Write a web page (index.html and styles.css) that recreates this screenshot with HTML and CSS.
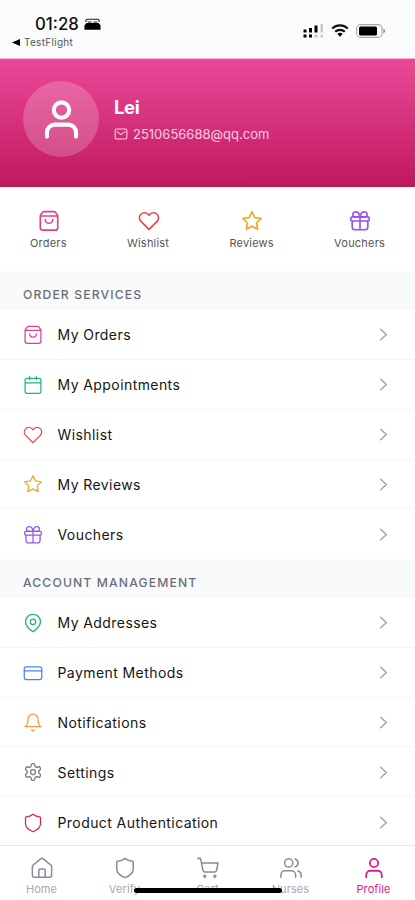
FILE: index.html
```html
<!DOCTYPE html>
<html lang="en">
<head>
<meta charset="utf-8">
<meta name="viewport" content="width=device-width, initial-scale=1">
<title>Profile</title>
<link rel="stylesheet" href="styles.css">
</head>
<body>
<svg class="sprite" aria-hidden="true">
  <symbol id="bag" viewBox="0 0 24 24"><path d="M2.500 6.500Q2.500 5.500 3.500 4.500L5 2.500q.7-.8 1.700-.8h10.600q1 0 1.700.8l1.500 2q1 1 1 2V19.500a2.500 2.500 0 0 1-2.500 2.500H5a2.500 2.500 0 0 1-2.500-2.500zM3 6.500h18M16 10.500a4 4 0 0 1-8 0"/></symbol>
  <symbol id="heart" viewBox="0 0 24 24"><path d="M20.800 4.600a5.500 5.500 0 0 0-7.800 0L12 5.700l-1-1.100a5.500 5.500 0 0 0-7.800 7.800L12 21.200l8.800-8.800a5.500 5.500 0 0 0 0-7.800z"/></symbol>
  <symbol id="star" viewBox="0 0 24 24"><path d="m12 2 3.100 6.300 6.900 1-5 4.900 1.200 6.900-6.200-3.300-6.200 3.300L7 14.200 2 9.300l6.900-1z"/></symbol>
  <symbol id="gift" viewBox="0 0 24 24"><rect x="2" y="7.500" width="20" height="4.500" rx="1.500"/><path d="M3.500 12v6.500a3 3 0 0 0 3 3h11a3 3 0 0 0 3-3V12M12 7.500v14M12 7.500H7.500a2.800 2.800 0 1 1 0-5.500C11 2 12 7.500 12 7.500zm0 0h4.500a2.800 2.800 0 1 0 0-5.500C13 2 12 7.500 12 7.500z"/></symbol>
  <symbol id="calendar" viewBox="0 0 24 24"><rect x="2.500" y="4" width="19" height="18" rx="2.500"/><path d="M8 1.500v4M16 1.500v4M3 9.500h18"/></symbol>
  <symbol id="pin" viewBox="0 0 24 24"><path d="M21 10.500C21 17 12 22.500 12 22.500S3 17 3 10.500a9 9 0 0 1 18 0z"/><circle cx="12" cy="10.500" r="3.300"/></symbol>
  <symbol id="card" viewBox="0 0 24 24"><rect x="1.500" y="4.500" width="21" height="15.500" rx="2.500"/><path d="M1.500 9.500h21"/></symbol>
  <symbol id="bell" viewBox="0 0 24 24"><path d="M18 8.500a6 6 0 0 0-12 0c0 7-3.500 9-3.500 9h19S18 15.500 18 8.500M13.700 21.500a2 2 0 0 1-3.400 0"/></symbol>
  <symbol id="gear" viewBox="0 0 24 24"><path d="M12.220 2h-.44a2 2 0 0 0-2 2v.18a2 2 0 0 1-1 1.730l-.43.25a2 2 0 0 1-2 0l-.15-.08a2 2 0 0 0-2.730.73l-.22.38a2 2 0 0 0 .73 2.730l.15.1a2 2 0 0 1 1 1.720v.51a2 2 0 0 1-1 1.740l-.15.09a2 2 0 0 0-.73 2.730l.22.38a2 2 0 0 0 2.730.73l.15-.08a2 2 0 0 1 2 0l.43.25a2 2 0 0 1 1 1.730V20a2 2 0 0 0 2 2h.44a2 2 0 0 0 2-2v-.18a2 2 0 0 1 1-1.730l.43-.25a2 2 0 0 1 2 0l.15.08a2 2 0 0 0 2.730-.73l.22-.39a2 2 0 0 0-.73-2.730l-.15-.08a2 2 0 0 1-1-1.740v-.5a2 2 0 0 1 1-1.740l.15-.09a2 2 0 0 0 .73-2.730l-.22-.38a2 2 0 0 0-2.730-.73l-.15.08a2 2 0 0 1-2 0l-.43-.25a2 2 0 0 1-1-1.730V4a2 2 0 0 0-2-2z"/><circle cx="12" cy="12" r="3"/></symbol>
  <symbol id="shield" viewBox="0 0 24 24"><path d="M12 1.500c2.500 2 5 3 8 3.200q1 .1 1 1V13c0 5-4 7.500-9 9.500-5-2-9-4.500-9-9.500V5.700q0-.9 1-1C7 4.500 9.500 3.500 12 1.500z"/></symbol>
  <symbol id="house" viewBox="0 0 24 24"><path d="M1.500 10.500a2 2 0 0 1 .7-1.500L10.600 2a2.100 2.100 0 0 1 2.800 0l8.400 7a2 2 0 0 1 .7 1.500v9.500a2 2 0 0 1-2 2h-17a2 2 0 0 1-2-2zM8.500 22v-7.500a1.500 1.500 0 0 1 1.500-1.500h4a1.500 1.500 0 0 1 1.500 1.500V22"/></symbol>
  <symbol id="cart" viewBox="0 0 24 24"><path d="M.8 1.500h3l2.800 13.200a2 2 0 0 0 2 1.600h10.700a2 2 0 0 0 2-1.600L23 6.500H4.800"/><circle cx="8.500" cy="21" r="1"/><circle cx="19.500" cy="21" r="1"/></symbol>
  <symbol id="user" viewBox="0 0 24 24"><circle cx="12" cy="6.500" r="4.500"/><path d="M3.500 22v-2.500a4.500 4.500 0 0 1 4.500-4.500h8a4.500 4.500 0 0 1 4.500 4.500V22"/></symbol>
  <symbol id="users" viewBox="0 0 24 24"><circle cx="9.500" cy="6.500" r="4.500"/><path d="M1 22v-2.500A4.500 4.500 0 0 1 5.500 15h7a4.500 4.500 0 0 1 4.500 4.500V22M23 22v-2.500a4.500 4.500 0 0 0-3.500-4.200M16.500 2.200a4.500 4.500 0 0 1 0 8.600"/></symbol>
  <symbol id="mail" viewBox="0 0 24 24"><rect x="2" y="3.500" width="20" height="17" rx="2"/><path d="m5 8 7 5 7-5"/></symbol>
  <symbol id="chevron" viewBox="0 0 24 24"><path d="m8 4.500 8 7.500-8 7.500"/></symbol>
</svg>

<div class="screen">
  <header class="status">
    <div class="status-left">
      <div class="clock">01:28
        <svg class="bed" viewBox="0 0 18 12"><path d="M2 4V2.500Q2 1 3.500 1h11Q16 1 16 2.500V4" fill="none" stroke="#222" stroke-width="1.200"/><path d="M4 3h4v2H4zM10 3h4v2h-4z" fill="#777"/><path d="M2.500 5h13L17.500 7.500V12H.5V7.500z"/></svg>
      </div>
      <div class="back"><svg class="back-arrow" viewBox="0 0 8 7"><path d="M8 0v7L0 3.500z"/></svg><span>TestFlight</span></div>
    </div>
    <div class="status-right">
      <svg class="signal" viewBox="0 0 21 14"><path d="M.5 5.500h3v3h-3zM6 4h3v4.500H6zM11.500 1.500h3v7h-3zM.5 10.500h3v3h-3zM6 10.500h3v3H6z"/><path d="M17.500 0h2.500v8.500h-2.500zM11.500 10.500h3v3h-3zM17.500 10.500H20v3h-2.500z" fill="#c9c9cb"/></svg>
      <svg class="wifi" viewBox="0 0 18 13"><path d="M1.200 4.500a11.500 11.500 0 0 1 15.600 0M4.200 7.700a7 7 0 0 1 9.600 0" fill="none" stroke="#111" stroke-width="2.200"/><path d="m9 12.800-2.700-2.700a3.900 3.900 0 0 1 5.400 0z"/></svg>
      <svg class="battery" viewBox="0 0 30 14"><rect x=".6" y=".6" width="25.500" height="12.800" rx="4" fill="none" stroke="#a9a9aa" stroke-width="1.100"/><rect x="3" y="2.600" width="18" height="8.800" rx="1.500"/><path d="M27.500 4.500q3 2.500 0 5z" fill="#777"/></svg>
    </div>
  </header>

  <section class="hero">
    <div class="avatar"><svg class="icon"><use href="#user"/></svg></div>
    <div class="identity">
      <h1 class="name">Lei</h1>
      <div class="email"><svg class="icon"><use href="#mail"/></svg><span>2510656688@qq.com</span></div>
    </div>
  </section>

  <section class="quick">
    <a class="quick-item pink"><svg class="icon"><use href="#bag"/></svg><span class="quick-label">Orders</span></a>
    <a class="quick-item red"><svg class="icon"><use href="#heart"/></svg><span class="quick-label">Wishlist</span></a>
    <a class="quick-item amber"><svg class="icon"><use href="#star"/></svg><span class="quick-label">Reviews</span></a>
    <a class="quick-item purple"><svg class="icon"><use href="#gift"/></svg><span class="quick-label">Vouchers</span></a>
  </section>

  <main class="menu">
    <h2 class="section-title">ORDER SERVICES</h2>
    <div class="list">
      <a class="row"><svg class="icon pink"><use href="#bag"/></svg><span class="label">My Orders</span><svg class="chevron"><use href="#chevron"/></svg></a>
      <a class="row"><svg class="icon green"><use href="#calendar"/></svg><span class="label">My Appointments</span><svg class="chevron"><use href="#chevron"/></svg></a>
      <a class="row"><svg class="icon red"><use href="#heart"/></svg><span class="label">Wishlist</span><svg class="chevron"><use href="#chevron"/></svg></a>
      <a class="row"><svg class="icon amber"><use href="#star"/></svg><span class="label">My Reviews</span><svg class="chevron"><use href="#chevron"/></svg></a>
      <a class="row"><svg class="icon purple"><use href="#gift"/></svg><span class="label">Vouchers</span><svg class="chevron"><use href="#chevron"/></svg></a>
    </div>
    <h2 class="section-title">ACCOUNT MANAGEMENT</h2>
    <div class="list">
      <a class="row"><svg class="icon green"><use href="#pin"/></svg><span class="label">My Addresses</span><svg class="chevron"><use href="#chevron"/></svg></a>
      <a class="row"><svg class="icon blue"><use href="#card"/></svg><span class="label">Payment Methods</span><svg class="chevron"><use href="#chevron"/></svg></a>
      <a class="row"><svg class="icon orange"><use href="#bell"/></svg><span class="label">Notifications</span><svg class="chevron"><use href="#chevron"/></svg></a>
      <a class="row"><svg class="icon gray"><use href="#gear"/></svg><span class="label">Settings</span><svg class="chevron"><use href="#chevron"/></svg></a>
      <a class="row"><svg class="icon crimson"><use href="#shield"/></svg><span class="label">Product Authentication</span><svg class="chevron"><use href="#chevron"/></svg></a>
    </div>
  </main>

  <nav class="tabs">
    <a class="tab"><svg class="icon"><use href="#house"/></svg><span>Home</span></a>
    <a class="tab"><svg class="icon"><use href="#shield"/></svg><span>Verify</span></a>
    <a class="tab"><svg class="icon"><use href="#cart"/></svg><span>Cart</span></a>
    <a class="tab"><svg class="icon"><use href="#users"/></svg><span>Nurses</span></a>
    <a class="tab active"><svg class="icon"><use href="#user"/></svg><span>Profile</span></a>
    <div class="home-indicator"></div>
  </nav>
</div>
</body>
</html>
```
FILE: styles.css
```css
* { box-sizing: border-box; }
body { margin: 0; background: #fff; color: #151515; font-family: Inter, "Liberation Sans", sans-serif; }
h1, h2 { margin: 0; }
svg { display: block; flex: none; }
.sprite { position: absolute; width: 0; height: 0; }
.icon, .chevron { fill: none; stroke: currentColor; stroke-linecap: round; stroke-linejoin: round; }
.screen { display: flex; flex-direction: column; width: 415px; height: 900px; overflow: hidden; }

.status { flex: none; height: 59px; display: flex; justify-content: space-between; background: #f9fbfd; border-bottom: 1px solid #f7b3d2; }
.status-left { padding: 14px 0 0 12px; }
.clock { display: flex; align-items: center; gap: 5px; padding-left: 23px; height: 20px; font-size: 16.800px; font-weight: 500; color: #111; }
.bed { width: 17px; height: 12px; }
.back { display: flex; align-items: center; gap: 4px; height: 16px; font-size: 10px; letter-spacing: .3px; color: #555; }
.back-arrow { width: 8px; height: 7px; }
.status-right { display: flex; align-items: center; padding: 3px 29px 0 0; }
.signal { width: 21px; height: 14px; margin-right: 7px; }
.wifi { width: 18px; height: 13px; margin-right: 7px; }
.battery { width: 30px; height: 14px; }

.hero { flex: none; height: 128px; display: flex; align-items: flex-start; gap: 15px; padding: 22px 23px 0; color: #fff; background: linear-gradient(#ec4899, #be185d); }
.avatar { display: flex; align-items: center; justify-content: center; width: 76px; height: 76px; border-radius: 50%; background: rgba(255,255,255,.2); }
.avatar .icon { width: 41px; height: 41px; stroke-width: 2.400; }
.identity { padding-top: 15px; }
.name { font-size: 18.500px; line-height: 23px; font-weight: 700; letter-spacing: -.4px; }
.email { display: flex; align-items: center; gap: 5px; margin-top: 5px; font-size: 13px; line-height: 20px; color: #f9cfe2; }
.email .icon { width: 14px; height: 14px; stroke-width: 1.800; }

.quick { flex: none; height: 84px; display: flex; justify-content: space-between; align-items: flex-start; padding: 23px 30px 0; }
.quick-item { display: flex; flex-direction: column; align-items: center; }
.quick-item .icon { width: 22px; height: 22px; margin-left: 1px; stroke-width: 1.800; }
.quick-label { margin-top: 3px; font-size: 11px; line-height: 16px; letter-spacing: .2px; color: #555; }

.menu { flex: 1; min-height: 0; overflow: hidden; }
.section-title { height: 39px; padding: 8px 23px 0; font-size: 12.200px; line-height: 32px; font-weight: 500; letter-spacing: 1.120px; color: #6b6e73; background: #f9fafb; }
.row { display: flex; align-items: center; height: 49.850px; padding: 1px 23px 0 22.500px; border-bottom: 1px solid #f6f6f7; }
.row:last-child { height: 49.500px; border-bottom: 0; }
.row .icon { width: 20px; height: 20px; stroke-width: 1.500; }
.label { flex: 1; margin-left: 15px; font-size: 14px; letter-spacing: .42px; }
.chevron { width: 17px; height: 17px; stroke-width: 2; color: #a1a1a6; }

.pink { color: #e23e91; }
.red { color: #ef4444; }
.amber { color: #eda91c; }
.purple { color: #9650f2; }
.green { color: #25b47f; }
.blue { color: #4b82f1; }
.orange { color: #f59a43; }
.gray { color: #70757f; }
.crimson { color: #dc2459; }

.tabs { position: relative; flex: none; height: 55px; display: grid; grid-template-columns: repeat(5, 1fr); border-top: 1px solid #fddde6; background: #fff; }
.tab { display: flex; flex-direction: column; align-items: center; padding-top: 11px; font-size: 11px; color: #a5a8b0; }
.tab .icon { width: 22px; height: 22px; stroke-width: 1.650; color: #898c98; }
.tab span { margin-top: 2px; line-height: 16px; letter-spacing: .1px; }
.tab.active, .tab.active .icon { color: #e0208a; }
.tab.active .icon { stroke-width: 2; }
.home-indicator { position: absolute; left: 134px; top: 42px; width: 148px; height: 5px; border-radius: 2.500px; background: #000; }
```
